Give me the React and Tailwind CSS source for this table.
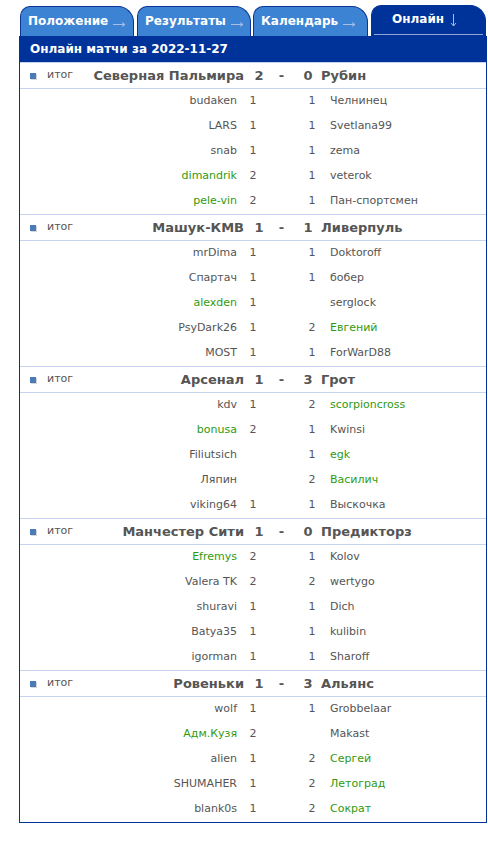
const FONT = "font-['DejaVu_Sans','Liberation_Sans',sans-serif]"

const matches = [
  {
    home: 'Северная Пальмира', hs: '2', as: '0', away: 'Рубин',
    rows: [
      ['budaken', '1', '1', 'Челнинец', 0],
      ['LARS', '1', '1', 'Svetlana99', 0],
      ['snab', '1', '1', 'zema', 0],
      ['dimandrik', '2', '1', 'veterok', 1],
      ['pele-vin', '2', '1', 'Пан-спортсмен', 1],
    ],
  },
  {
    home: 'Машук-КМВ', hs: '1', as: '1', away: 'Ливерпуль',
    rows: [
      ['mrDima', '1', '1', 'Doktoroff', 0],
      ['Спартач', '1', '1', 'бобер', 0],
      ['alexden', '1', '', 'serglock', 1],
      ['PsyDark26', '1', '2', 'Евгений', 2],
      ['MOST', '1', '1', 'ForWarD88', 0],
    ],
  },
  {
    home: 'Арсенал', hs: '1', as: '3', away: 'Грот',
    rows: [
      ['kdv', '1', '2', 'scorpioncross', 2],
      ['bonusa', '2', '1', 'Kwinsi', 1],
      ['Filiutsich', '', '1', 'egk', 2],
      ['Ляпин', '', '2', 'Василич', 2],
      ['viking64', '1', '1', 'Выскочка', 0],
    ],
  },
  {
    home: 'Манчестер Сити', hs: '1', as: '0', away: 'Предикторз',
    rows: [
      ['Efremys', '2', '1', 'Kolov', 1],
      ['Valera TK', '2', '2', 'wertygo', 0],
      ['shuravi', '1', '1', 'Dich', 0],
      ['Batya35', '1', '1', 'kulibin', 0],
      ['igorman', '1', '1', 'Sharoff', 0],
    ],
  },
  {
    home: 'Ровеньки', hs: '1', as: '3', away: 'Альянс',
    rows: [
      ['wolf', '1', '1', 'Grobbelaar', 0],
      ['Адм.Кузя', '2', '', 'Makast', 1],
      ['alien', '1', '2', 'Сергей', 2],
      ['SHUMAHER', '1', '2', 'Летоград', 2],
      ['blank0s', '1', '2', 'Сократ', 2],
    ],
  },
]

function RightArrow() {
  return (
    <svg width="13" height="7" viewBox="0 0 13 7" className="ml-[5px] mt-[6px]">
      <path d="M0 4.5H12M9 2.5L12 4.5L9 6.5" stroke="#a8bde3" strokeWidth="1" fill="none" />
    </svg>
  )
}

function DownArrow() {
  return (
    <svg width="7" height="13" viewBox="0 0 7 13" className="ml-[6px] mt-[2px]">
      <path d="M3.5 0V12M1 9L3.5 12L6 9" stroke="#a8bde3" strokeWidth="1" fill="none" />
    </svg>
  )
}

function Tab({ label, width, active }) {
  if (active) {
    return (
      <div
        className={`${width} h-[31px] flex flex-col rounded-tl-[10px] rounded-tr-[16px] bg-[#003399] border border-b-0 border-[#003399]`}
      >
        <div className="flex items-start pl-[20px] pt-[6px] flex-1">
          <span className="text-white font-bold text-[12px] leading-[14px]">{label}</span>
          <DownArrow />
        </div>
        <div className="h-px mx-[2px] mb-[1px] bg-[#8ea3d8]" />
      </div>
    )
  }
  return (
    <div
      className={`${width} h-[30px] flex items-start pl-[7px] pt-[7px] rounded-tl-[10px] rounded-tr-[16px] bg-[#3c83d3] border border-b-0 border-[#0b3495]`}
    >
      <span className="text-white font-bold text-[12px] leading-[14px]">{label}</span>
      <RightArrow />
    </div>
  )
}

function Name({ children, tone }) {
  return <span className={tone ? 'text-[#2f9a0f]' : 'text-[#555555]'}>{children}</span>
}

function Match({ m }) {
  return (
    <div>
      <div className="h-[27px] flex items-center border-y border-[#c6d3ef] text-[#555555]">
        <div className="w-[224px] flex items-center">
          <span className="ml-[10px] w-[6px] h-[6px] bg-[#4a7cb6] shadow-[1px_1px_0_#d6d6d6]" />
          <span className="ml-[11px] text-[11px]">итог</span>
          <span className="flex-1 text-right font-bold text-[13px] whitespace-nowrap">{m.home}</span>
        </div>
        <span className="ml-[6px] w-[18px] text-center font-bold text-[13px]">{m.hs}</span>
        <span className="w-[27px] text-center font-bold text-[13px]">-</span>
        <span className="w-[26px] text-center font-bold text-[13px]">{m.as}</span>
        <span className="font-bold text-[13px] whitespace-nowrap">{m.away}</span>
      </div>
      {m.rows.map((r, i) => (
        <div key={i} className="h-[25px] flex items-center text-[11px] text-[#555555]">
          <div className="w-[217px] text-right whitespace-nowrap">
            <Name tone={r[4] === 1}>{r[0]}</Name>
          </div>
          <span className="w-[32px] text-center">{r[1]}</span>
          <span className="w-[27px]" />
          <span className="w-[32px] text-center">{r[2]}</span>
          <span className="ml-[2px] whitespace-nowrap">
            <Name tone={r[4] === 2}>{r[3]}</Name>
          </span>
        </div>
      ))}
    </div>
  )
}

export default function App() {
  return (
    <div className={`${FONT} bg-white min-h-[841px] pt-[5px]`}>
      <div className="ml-[19px] w-[468px]">
        <div className="flex items-end pl-px">
          <Tab label="Положение" width="w-[114px]" />
          <div className="w-[3px]" />
          <Tab label="Результаты" width="w-[114px]" />
          <div className="w-[2px]" />
          <Tab label="Календарь" width="w-[115px]" />
          <div className="w-[3px]" />
          <Tab label="Онлайн" width="w-[115px]" active />
        </div>
        <div className="border border-t-0 border-[#003399]">
          <div className="h-[26px] bg-[#003399] flex items-center pl-[10px]">
            <span className="text-white font-bold text-[12px]">Онлайн матчи за 2022-11-27</span>
          </div>
          {matches.map((m, i) => (
            <Match key={i} m={m} />
          ))}
        </div>
      </div>
    </div>
  )
}
